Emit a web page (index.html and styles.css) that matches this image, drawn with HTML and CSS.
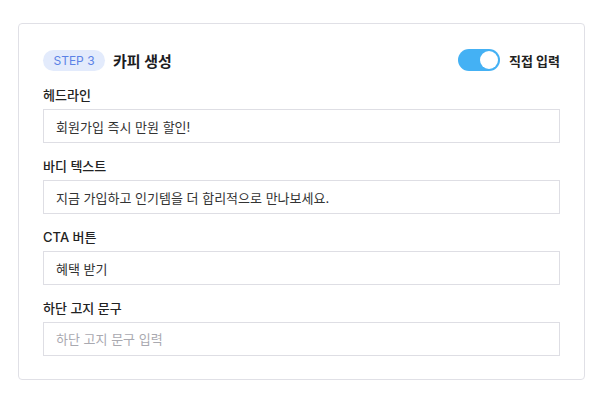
FILE: index.html
```html
<!DOCTYPE html>
<html lang="ko">
<head>
    <meta charset="UTF-8">
    <meta name="viewport" content="width=device-width, initial-scale=1.0">
    <title>카피 생성</title>
    <link rel="stylesheet" href="styles.css">
</head>
<body>
    <div class="card">
        <div class="card-header">
            <div class="title-group">
                <span class="step-badge">STEP 3</span>
                <h2 class="card-title">카피 생성</h2>
            </div>
            <label class="toggle-group">
                <span class="toggle on"><span class="knob"></span></span>
                <span class="toggle-label">직접 입력</span>
            </label>
        </div>
        <div class="field">
            <div class="field-label">헤드라인</div>
            <input class="field-input" type="text" value="회원가입 즉시 만원 할인!">
        </div>
        <div class="field">
            <div class="field-label">바디 텍스트</div>
            <input class="field-input" type="text" value="지금 가입하고 인기템을 더 합리적으로 만나보세요.">
        </div>
        <div class="field">
            <div class="field-label">CTA 버튼</div>
            <input class="field-input" type="text" value="혜택 받기">
        </div>
        <div class="field">
            <div class="field-label">하단 고지 문구</div>
            <input class="field-input" type="text" placeholder="하단 고지 문구 입력">
        </div>
    </div>
</body>
</html>
```

FILE: styles.css
```css
body {
    margin: 0;
    padding: 23px 15px 0 18px;
    background: #fff;
    font-family: Inter, "Noto Sans CJK KR", sans-serif;
    color: #222;
}
.card {
    width: 567px;
    box-sizing: border-box;
    border: 1px solid #e0e0e6;
    border-radius: 4px;
    padding: 25px 24px 23px 24px;
    display: flex;
    flex-direction: column;
    gap: 14px;
}
.card-header {
    display: flex;
    align-items: center;
    justify-content: space-between;
    height: 22px;
    margin-bottom: 1px;
}
.title-group {
    display: flex;
    align-items: center;
    gap: 8px;
}
.step-badge {
    display: inline-flex;
    align-items: center;
    justify-content: center;
    width: 62px;
    height: 21px;
    border-radius: 11px;
    background: #e3ebfc;
    color: #5b82e6;
    font-size: 12px;
}
.card-title {
    margin: 0;
    font-size: 15px;
    font-weight: 700;
    color: #1d1d1f;
}
.toggle-group {
    display: flex;
    align-items: center;
    gap: 9px;
}
.toggle {
    width: 42px;
    height: 22px;
    border-radius: 11px;
    background: #44b1f4;
    display: flex;
    align-items: center;
    justify-content: flex-end;
    padding: 0 2px;
    box-sizing: border-box;
}
.knob {
    width: 18px;
    height: 18px;
    border-radius: 50%;
    background: #fff;
}
.toggle-label {
    font-size: 13px;
    font-weight: 700;
    color: #222;
}
.field {
    display: flex;
    flex-direction: column;
}
.field-label {
    font-size: 13px;
    font-weight: 500;
    line-height: 18px;
    margin-bottom: 5px;
    color: #222;
}
.field-input {
    height: 34px;
    box-sizing: border-box;
    border: 1px solid #dedee4;
    border-radius: 0;
    padding: 0 12px;
    font-family: Inter, "Noto Sans CJK KR", sans-serif;
    font-size: 13px;
    color: #333;
    outline: none;
}
.field-input::placeholder {
    color: #a9a9b0;
}
```
